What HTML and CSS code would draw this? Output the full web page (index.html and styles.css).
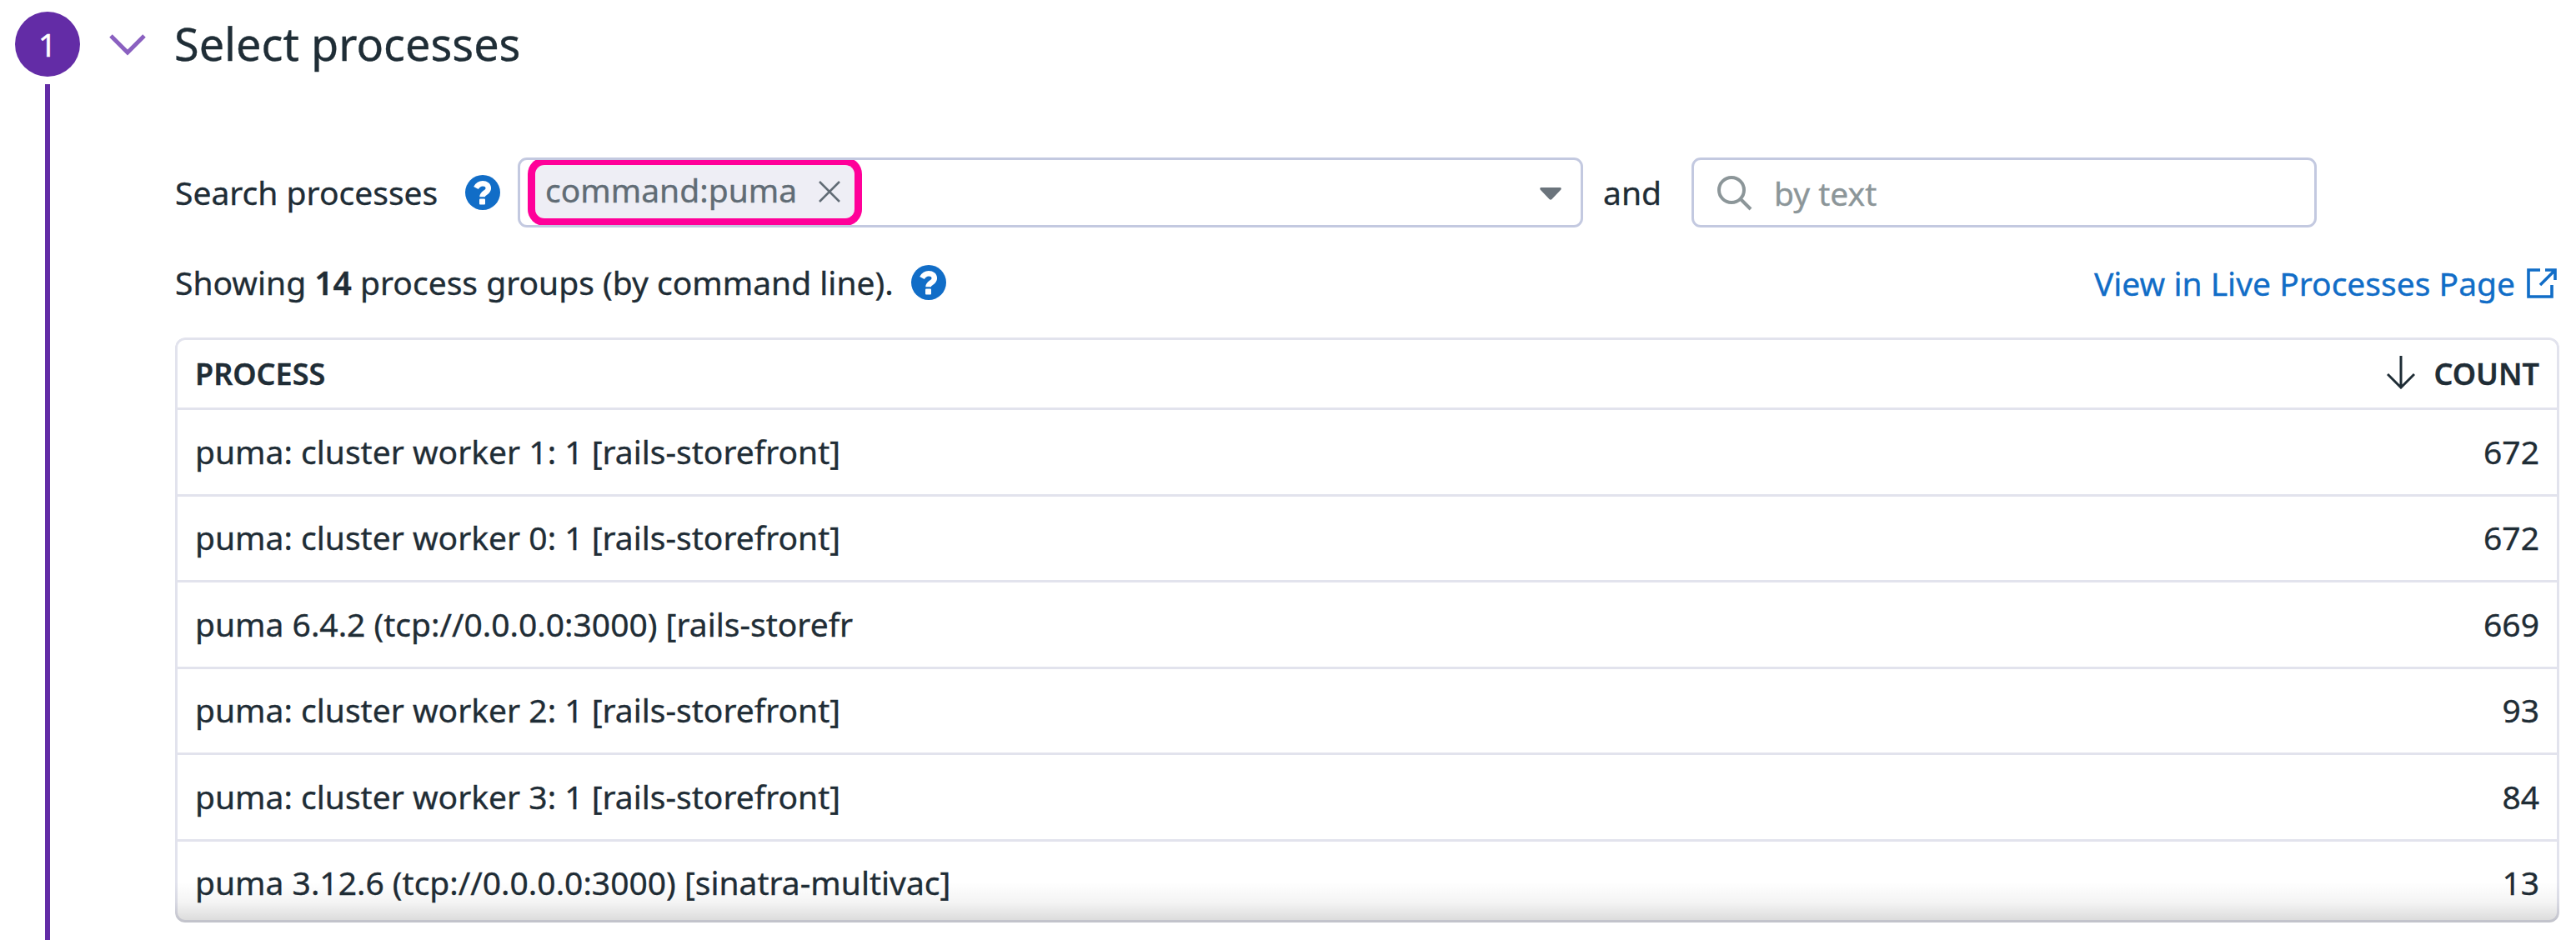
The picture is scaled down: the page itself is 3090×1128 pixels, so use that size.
FILE: index.html
```html
<!DOCTYPE html>
<html lang="en">
<head>
<meta charset="utf-8">
<title>Select processes</title>
<link rel="stylesheet" href="styles.css">
</head>
<body>
<main class="step">
  <aside class="rail">
    <div class="badge">1</div>
    <div class="rail-line"></div>
  </aside>
  <section class="content">
    <header class="title-row">
      <svg class="chevron" viewBox="0 0 44 26"><path d="M2 2 22 22 42 2"/></svg>
      <h1 class="title">Select processes</h1>
    </header>
    <div class="panel">
      <div class="search-row">
        <label class="search-label">Search processes</label>
        <svg class="help" viewBox="0 0 42 42"><circle cx="21" cy="21" r="21"/><path class="hook" d="M13 15.500C15 12 17.500 10.300 21 10.300c4 0 6.800 2.200 6.800 5.700 0 5.500-7.300 5-7.300 10.300"/><rect x="17" y="28.500" width="7" height="7" rx="1"/></svg>
        <div class="select">
          <div class="chip"><span class="chip-text">command:puma</span>
            <svg class="close" viewBox="0 0 26 26"><path d="M1 1 25 25M25 1 1 25"/></svg>
          </div>
          <svg class="caret" viewBox="0 0 26 15"><path d="M1 0h24q1.500 1.500 0 3L14.500 14q-1.500 1.500-3 0L1 3q-1.500-1.500 0-3z"/></svg>
        </div>
        <span class="and">and</span>
        <div class="text-input">
          <svg class="magnifier" viewBox="0 0 42 42"><circle cx="17" cy="17" r="15"/><path d="M28 28 40 40"/></svg>
          <span class="placeholder">by text</span>
        </div>
      </div>
      <div class="summary-row">
        <p class="summary">Showing <b>14</b> process groups (by command line).</p>
        <svg class="help" viewBox="0 0 42 42"><circle cx="21" cy="21" r="21"/><path class="hook" d="M13 15.500C15 12 17.500 10.300 21 10.300c4 0 6.800 2.200 6.800 5.700 0 5.500-7.300 5-7.300 10.300"/><rect x="17" y="28.500" width="7" height="7" rx="1"/></svg>
        <a class="link"><span>View in Live Processes Page</span>
          <svg class="external" viewBox="0 0 36 36"><path d="M16 2H2v32h28V20M22 2h12v12M34 2 16 20"/></svg>
        </a>
      </div>
      <div class="table-frame">
        <div class="table">
          <div class="row head"><span>PROCESS</span><span class="count"><svg class="sort" viewBox="0 0 34 40"><path d="M17 0v37M1 22 17 38 33 22"/></svg><span>COUNT</span></span></div>
          <div class="row"><span>puma: cluster worker 1: 1 [rails-storefront]</span><span>672</span></div>
          <div class="row"><span>puma: cluster worker 0: 1 [rails-storefront]</span><span>672</span></div>
          <div class="row"><span>puma 6.4.2 (tcp://0.0.0.0:3000) [rails-storefr</span><span>669</span></div>
          <div class="row"><span>puma: cluster worker 2: 1 [rails-storefront]</span><span>93</span></div>
          <div class="row"><span>puma: cluster worker 3: 1 [rails-storefront]</span><span>84</span></div>
          <div class="row"><span>puma 3.12.6 (tcp://0.0.0.0:3000) [sinatra-multivac]</span><span>13</span></div>
        </div>
      </div>
    </div>
  </section>
</main>
</body>
</html>
```
FILE: styles.css
```css
* { box-sizing: border-box; }
body {
  margin: 0;
  width: 3090px;
  height: 1128px;
  overflow: hidden;
  background: #fff;
  color: #1f2d36;
  font: 400 39px/54px "Noto Sans", sans-serif;
  -webkit-text-stroke: 0.35px;
  white-space: nowrap;
}
svg { display: block; flex: none; fill: none; }
.step { display: flex; height: 1128px; }
.rail {
  display: flex;
  flex-direction: column;
  align-items: center;
  gap: 9px;
  width: 114px;
  padding-top: 14px;
}
.badge {
  width: 78px;
  height: 78px;
  border-radius: 50%;
  background: #632ca6;
  color: #fff;
  text-align: center;
  line-height: 78px;
}
.rail-line { flex: 1; width: 6px; background: #632ca6; }
.content { flex: 1; padding-right: 20px; }
.title-row {
  display: flex;
  align-items: center;
  gap: 34px;
  height: 106px;
  padding-left: 17px;
}
.chevron { width: 44px; height: 26px; margin-top: 2px; stroke: #8a60c0; stroke-width: 5; }
.title {
  margin: 0;
  padding-bottom: 3px;
  font-size: 54px;
  font-weight: 400;
  line-height: 76px;
}
.panel { padding: 83px 0 0 96px; }
.search-row { display: flex; align-items: center; height: 84px; }
.search-label { width: 315px; }
.help { width: 42px; height: 42px; margin-left: 33px; fill: #116dc7; }
.help .hook { fill: none; stroke: #fff; stroke-width: 6.5; }
.help rect { fill: #fff; }
.select, .text-input {
  display: flex;
  align-items: center;
  height: 84px;
  border: 3px solid #c3c9e0;
  border-radius: 11px;
}
.select {
  justify-content: space-between;
  width: 1278px;
  margin-left: 21px;
  padding: 0 23px 0 18px;
  overflow: hidden;
}
.chip {
  display: flex;
  align-items: center;
  justify-content: space-between;
  width: 383px;
  height: 64px;
  margin-bottom: 2px;
  padding: 0 17px 0 12px;
  border-radius: 11px;
  background: #eeeef5;
  box-shadow: 0 0 0 9px #ff0099;
  color: #616c75;
}
.chip-text { padding-bottom: 4px; }
.close { width: 26px; height: 26px; stroke: #616c75; stroke-width: 2.5; }
.caret { width: 26px; height: 15px; margin-top: 3px; fill: #6b747c; }
.and { width: 130px; padding-left: 24px; }
.text-input { gap: 26px; width: 750px; padding-left: 28px; color: #8c9699; }
.placeholder { padding-top: 2px; }
.magnifier { width: 42px; height: 42px; margin-top: 1px; stroke: #8c9699; stroke-width: 4; }
.summary-row { display: flex; align-items: center; height: 132px; }
.summary { width: 862px; margin: 0; }
.summary b { font-weight: 600; }
.summary-row .help { margin-left: 21px; }
.link {
  display: flex;
  align-items: center;
  gap: 14px;
  margin-left: auto;
  padding: 2px 3px 0 0;
  color: #116dc7;
}
.external { width: 36px; height: 36px; stroke: #116dc7; stroke-width: 3.6; }
.table-frame {
  position: relative;
  height: 702px;
  overflow: hidden;
  border-radius: 12px;
}
.table {
  height: 702px;
  overflow: hidden;
  border: 3px solid #e2e3ed;
  border-radius: 12px;
}
/* Scroll shadow over the last visible row and its frame */
.table-frame::after {
  content: "";
  position: absolute;
  inset: auto 0 0;
  height: 49px;
  background: linear-gradient(rgba(0,0,0,0), rgba(0,0,0,.045) 50%, rgba(0,0,0,.15));
}
.row {
  display: flex;
  align-items: center;
  justify-content: space-between;
  height: 103.5px;
  padding: 0 21px 1px;
  border-bottom: 3px solid #e2e3ed;
}
.head { height: 84px; padding-bottom: 0; font-size: 36px; font-weight: 600; }
.count { display: flex; align-items: center; gap: 22px; }
.sort { width: 34px; height: 40px; margin-bottom: 3px; stroke: #1f2d36; stroke-width: 3; }
```
